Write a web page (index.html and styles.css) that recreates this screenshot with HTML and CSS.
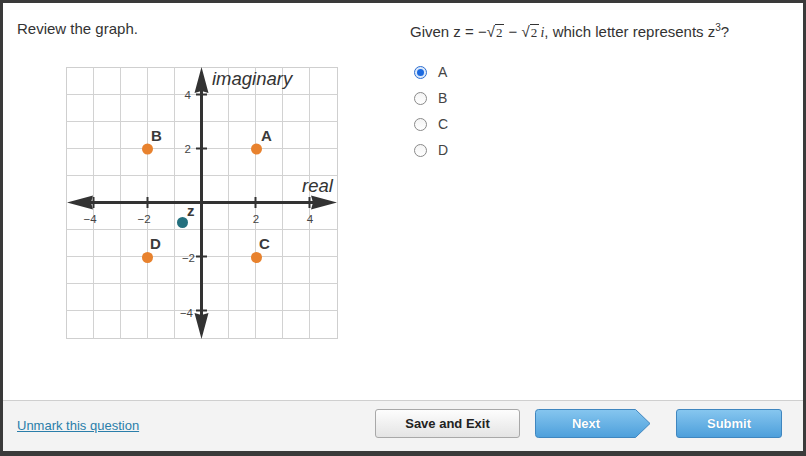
FILE: index.html
```html
<!DOCTYPE html>
<html>
<head>
<meta charset="utf-8">
<link rel="stylesheet" href="styles.css">
</head>
<body>
<div class="frame">
  <div class="main">
    <div class="left">
      <p class="prompt">Review the graph.</p>
      <svg class="graph" width="290" height="290" viewBox="56 56 290 290" xmlns="http://www.w3.org/2000/svg">
        <rect x="66.5" y="66.5" width="271" height="271" fill="#fff" stroke="#cfcfcf" stroke-width="1"/>
        <g stroke="#d2d2d2" stroke-width="1">
          <line x1="93.5" y1="66.5" x2="93.5" y2="337.5"/>
          <line x1="120.5" y1="66.5" x2="120.5" y2="337.5"/>
          <line x1="147.5" y1="66.5" x2="147.5" y2="337.5"/>
          <line x1="174.5" y1="66.5" x2="174.5" y2="337.5"/>
          <line x1="228.5" y1="66.5" x2="228.5" y2="337.5"/>
          <line x1="255.5" y1="66.5" x2="255.5" y2="337.5"/>
          <line x1="282.5" y1="66.5" x2="282.5" y2="337.5"/>
          <line x1="309.5" y1="66.5" x2="309.5" y2="337.5"/>
          <line y1="93.5" x1="66.5" y2="93.5" x2="337.5"/>
          <line y1="120.5" x1="66.5" y2="120.5" x2="337.5"/>
          <line y1="147.5" x1="66.5" y2="147.5" x2="337.5"/>
          <line y1="174.5" x1="66.5" y2="174.5" x2="337.5"/>
          <line y1="228.5" x1="66.5" y2="228.5" x2="337.5"/>
          <line y1="255.5" x1="66.5" y2="255.5" x2="337.5"/>
          <line y1="282.5" x1="66.5" y2="282.5" x2="337.5"/>
          <line y1="309.5" x1="66.5" y2="309.5" x2="337.5"/>
        </g>
        <g stroke="#333" stroke-width="3">
          <line x1="88" y1="201.5" x2="316" y2="201.5"/>
          <line x1="201.5" y1="86" x2="201.5" y2="318"/>
        </g>
        <g fill="#333">
          <polygon points="67,201.5 93,194.5 91,201.5 93,208.5"/>
          <polygon points="337,201.5 311,194.5 313,201.5 311,208.5"/>
          <polygon points="201.5,66 194.5,92 201.5,90 208.5,92"/>
          <polygon points="201.5,338 194.5,312 201.5,314 208.5,312"/>
        </g>
        <g stroke="#333" stroke-width="2">
          <line x1="93.5" y1="196" x2="93.5" y2="207"/>
          <line x1="147.5" y1="196" x2="147.5" y2="207"/>
          <line x1="255.5" y1="196" x2="255.5" y2="207"/>
          <line x1="309.5" y1="196" x2="309.5" y2="207"/>
          <line y1="93.5" x1="196" y2="93.5" x2="207"/>
          <line y1="147.5" x1="196" y2="147.5" x2="207"/>
          <line y1="255.5" x1="196" y2="255.5" x2="207"/>
          <line y1="309.5" x1="196" y2="309.5" x2="207"/>
        </g>
        <g class="tick" text-anchor="middle">
          <text x="90" y="222">−4</text>
          <text x="144" y="222">−2</text>
          <text x="256" y="222">2</text>
          <text x="310" y="222">4</text>
        </g>
        <g class="tick" text-anchor="end">
          <text x="191" y="98">4</text>
          <text x="191" y="152">2</text>
          <text x="195" y="261">−2</text>
          <text x="193" y="316">−4</text>
        </g>
        <text class="axis" x="212" y="84">imaginary</text>
        <text class="axis" x="302" y="191">real</text>
        <g fill="#e8822e">
          <circle cx="147.5" cy="148" r="5.5"/>
          <circle cx="256.5" cy="148" r="5.5"/>
          <circle cx="147.5" cy="256.5" r="5.5"/>
          <circle cx="256.5" cy="256.5" r="5.5"/>
        </g>
        <circle cx="182.5" cy="221.5" r="5.5" fill="#24707e"/>
        <g class="pt">
          <text x="151" y="140">B</text>
          <text x="261" y="140">A</text>
          <text x="150" y="248">D</text>
          <text x="259" y="248">C</text>
          <text x="187" y="215">z</text>
        </g>
      </svg>
    </div>
    <div class="right">
      <p class="question">Given z = −<span class="rad"><span class="radsign">√</span><span class="radicand">2</span></span> − <span class="rad"><span class="radsign">√</span><span class="radicand">2</span></span> <span class="imag">i</span>, which letter represents z<sup>3</sup>?</p>
      <ul class="options">
        <li><span class="radio checked"></span><span>A</span></li>
        <li><span class="radio"></span><span>B</span></li>
        <li><span class="radio"></span><span>C</span></li>
        <li><span class="radio"></span><span>D</span></li>
      </ul>
    </div>
  </div>
  <div class="footer">
    <a class="unmark" href="#">Unmark this question</a>
    <div class="buttons">
      <button class="btn save">Save and Exit</button>
      <button class="btn next">
        <svg class="next-shape" width="116" height="29" viewBox="0 0 116 29" xmlns="http://www.w3.org/2000/svg">
          <defs>
            <linearGradient id="bg" x1="0" y1="0" x2="0" y2="1">
              <stop offset="0" stop-color="#86c6ef"/>
              <stop offset="1" stop-color="#4d9fdb"/>
            </linearGradient>
          </defs>
          <path d="M3.5 0.5 H100.5 L115 14.5 L100.5 28.5 H3.5 Q0.5 28.5 0.5 25.5 V3.5 Q0.5 0.5 3.5 0.5 Z" fill="url(#bg)" stroke="#3f86bf"/>
        </svg>
        <span class="next-label">Next</span>
      </button>
      <button class="btn submit">Submit</button>
    </div>
  </div>
</div>
</body>
</html>
```
FILE: styles.css
```css
* { box-sizing: border-box; }
html, body { margin: 0; padding: 0; }
body {
  width: 806px;
  height: 456px;
  font-family: "Liberation Sans", Arial, sans-serif;
  color: #333;
  background: #3a3a3a;
}
.frame {
  width: 806px;
  height: 456px;
  border-style: solid;
  border-color: #3a3a3a;
  border-width: 3px 3px 5px 3px;
  background: #fff;
  display: flex;
  flex-direction: column;
}
.main {
  flex: 1;
  display: flex;
}
.left {
  width: 407px;
  padding: 17px 0 0 14px;
}
.prompt {
  margin: 0;
  font-size: 15px;
  line-height: 18px;
}
.graph {
  display: block;
  margin: 19px 0 0 39px;
}
.tick { font-family: "Liberation Sans", Arial, sans-serif; font-size: 11.5px; fill: #444; }
.axis { font-family: "Liberation Sans", Arial, sans-serif; font-size: 18.5px; font-style: italic; fill: #333; }
.pt { font-family: "Liberation Sans", Arial, sans-serif; font-size: 15px; font-weight: bold; fill: #3a3a3a; }
.right {
  flex: 1;
  padding-top: 20px;
}
.question {
  margin: 0;
  font-size: 15px;
  line-height: 18px;
}
.rad { white-space: nowrap; }
.radsign { font-size: 15px; }
.radicand {
  font-family: "Liberation Serif", "Times New Roman", serif;
  font-size: 13px;
  border-top: 1px solid #333;
  padding: 0 2px 0 1px;
}
.imag {
  font-family: "Liberation Serif", "Times New Roman", serif;
  font-style: italic;
  font-size: 14px;
  margin-left: -3px;
}
sup { font-size: 10px; line-height: 0; vertical-align: 6px; }
.options {
  list-style: none;
  margin: 17px 0 0 0;
  padding: 0 0 0 4px;
}
.options li {
  display: flex;
  align-items: center;
  height: 26px;
  font-size: 14px;
  color: #444;
}
.radio {
  width: 13px;
  height: 13px;
  border-radius: 50%;
  border: 1px solid #8a8a8a;
  background: linear-gradient(#f4f4f4, #fff);
  margin-right: 11px;
  position: relative;
}
.radio.checked {
  border-color: #2f6fd0;
  background: #dbe9fb;
}
.radio.checked::after {
  content: "";
  position: absolute;
  left: 2px;
  top: 2px;
  width: 7px;
  height: 7px;
  border-radius: 50%;
  background: #1c6ae0;
}
.footer {
  height: 51px;
  border-top: 1px solid #cfcfcf;
  background: #f3f3f3;
  display: flex;
  align-items: flex-start;
  justify-content: space-between;
  padding: 0 21px 0 14px;
}
.unmark {
  margin-top: 17px;
  font-size: 13px;
  color: #2a7eaa;
  text-decoration: underline;
}
.buttons {
  display: flex;
  margin-top: 8px;
}
.btn {
  height: 29px;
  font-family: "Liberation Sans", Arial, sans-serif;
  font-weight: bold;
  font-size: 13px;
  border-radius: 3px;
  padding: 0;
  cursor: pointer;
}
.save {
  width: 145px;
  background: linear-gradient(#fdfdfd, #e4e4e4);
  border: 1px solid #a8a8a8;
  color: #222;
}
.next {
  width: 116px;
  margin-left: 15px;
  border: none;
  background: transparent;
  position: relative;
  color: #fff;
}
.next-shape {
  position: absolute;
  left: 0;
  top: 0;
}
.next-label {
  position: relative;
  margin-right: 14px;
  text-shadow: 0 0 1px #3f86bf;
}
.submit {
  width: 106px;
  margin-left: 25px;
  border: 1px solid #3f86bf;
  background: linear-gradient(#86c6ef, #4d9fdb);
  color: #fff;
  text-shadow: 0 0 1px #3f86bf;
}
```
